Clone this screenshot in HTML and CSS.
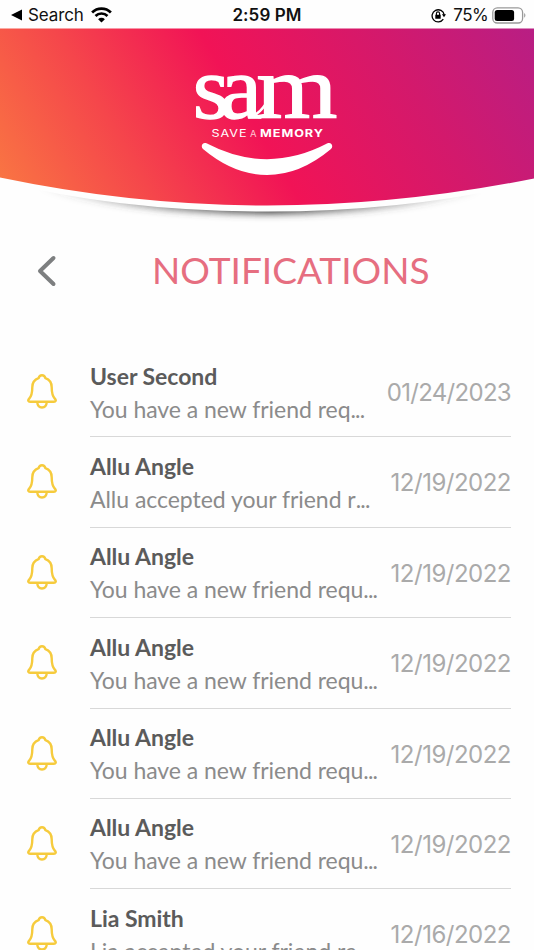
FILE: index.html
```html
<!DOCTYPE html>
<html lang="en">
<head>
<meta charset="utf-8">
<title>Notifications</title>
<link rel="stylesheet" href="styles.css">
</head>
<body>
<svg class="defs" aria-hidden="true">
  <symbol id="bell" viewBox="0 0 30 35">
    <path d="M15 1.300c-1.900 0-3 1.200-3.400 2.900C7.400 5.700 5.300 9 5.300 13.200c0 6.300-.9 9-3.100 11.400-1.700 1.900-.9 3.200.9 3.200h23.800c1.800 0 2.600-1.300.9-3.200-2.200-2.400-3.100-5.100-3.100-11.400 0-4.200-2.100-7.500-6.300-9C18 2.500 16.900 1.300 15 1.300zM10.200 28c.3 3.600 2.200 5.500 4.800 5.500s4.500-1.900 4.800-5.500"/>
  </symbol>
</svg>
<div class="status">
  <div class="status-left">
    <svg width="11" height="12" viewBox="0 0 11 12"><path d="M0 6 11 .5v11z"/></svg>
    <span class="search">Search</span>
    <svg class="wifi" width="21" height="16" viewBox="0 0 21 16"><g fill="none" stroke="#000" stroke-width="2.700"><path d="M1.100 5.500a13.400 13.400 0 0 1 18.800 0M4.500 9a8.500 8.500 0 0 1 12 0"/></g><path d="M10.500 15.600 7.100 12.200a4.900 4.900 0 0 1 6.800 0z"/></svg>
  </div>
  <span class="time">2:59 PM</span>
  <div class="status-right">
    <svg width="15" height="15" viewBox="0 0 15 15"><path d="M12.300 11.200A6.100 6.100 0 1 1 13.200 6.800" fill="none" stroke="#000" stroke-width="1.300"/><path d="M10.900 6.200H15l-2 3zM4.300 6.700h5.400v4H4.300z"/><path d="M5.400 7V5.500a1.600 1.600 0 0 1 3.200 0V7" fill="none" stroke="#000" stroke-width="1.100"/></svg>
    <span class="percent">75%</span>
    <svg width="34" height="17" viewBox="0 0 34 17"><rect x=".8" y=".8" width="29.800" height="15.200" rx="4.500" fill="#fff" stroke="#999" stroke-width="1.300"/><rect x="2.700" y="2.900" width="19.400" height="11" rx="2.500"/><path d="M32.200 6c1.600.8 1.600 4 0 4.800z" fill="#999"/></svg>
  </div>
</div>
<header class="hero">
  <svg width="534" height="200" viewBox="0 28 534 200">
    <defs>
      <linearGradient id="brand" gradientUnits="userSpaceOnUse" x1="0" y1="178" x2="461" y2="-95">
        <stop offset="0" stop-color="#f97443"/>
        <stop offset=".23" stop-color="#f5464b"/>
        <stop offset=".46" stop-color="#f11356"/>
        <stop offset=".75" stop-color="#d3196c"/>
        <stop offset="1" stop-color="#b81e84"/>
      </linearGradient>
      <linearGradient id="fade" gradientUnits="userSpaceOnUse" x1="40" y1="0" x2="480" y2="0">
        <stop offset="0" stop-color="#444" stop-opacity="0"/>
        <stop offset=".25" stop-color="#444" stop-opacity=".55"/>
        <stop offset=".53" stop-color="#444" stop-opacity="1"/>
        <stop offset="1" stop-color="#444" stop-opacity="0"/>
      </linearGradient>
      <filter id="soft" x="-10%" y="-50%" width="120%" height="200%"><feGaussianBlur stdDeviation="3.500"/></filter>
    </defs>
    <path d="M20 182Q120 214 267 214T514 182V160H20z" fill="url(#fade)" filter="url(#soft)"/>
    <path d="M0 150V181Q120 211.500 267 211.500T534 181V150z" fill="#fefefe"/>
    <path d="M0 28.500H534V178.500Q400 205.500 267 205.500T0 177.500z" fill="url(#brand)"/>
    <text class="logo" transform="scale(1.080 1)" x="178.500 203.500" y="118.500">sa</text>
    <text class="logo" transform="scale(1.180 1)" x="217.300" y="118.500">m</text>
    <path class="logo-link" d="M250 117Q259 114 265 105"/>
    <text class="tag" x="211.500" y="137" textLength="36" lengthAdjust="spacingAndGlyphs">SAVE</text>
    <text class="tag-small" x="250" y="137">A</text>
    <text class="tag tag-bold" x="260" y="137" textLength="64" lengthAdjust="spacingAndGlyphs">MEMORY</text>
    <path d="M206.500 143.300Q267 175 327.500 143.300C331 141.500 334 146 331 149Q300 175 267 175T203 149C200 146 203 141.500 206.500 143.300z" fill="#fff"/>
  </svg>
</header>
<div class="heading">
  <svg class="back" width="20" height="32" viewBox="0 0 20 32"><path d="M16.500 3 3 16l13.500 13"/></svg>
  <h1>NOTIFICATIONS</h1>
</div>
<main class="list">
  <article class="row"><svg class="bell"><use href="#bell"/></svg><div class="content"><div class="copy"><h2>User Second</h2><p>You have a new friend req<span>...</span></p></div><time class="date-wide">01/24/2023</time></div></article>
  <article class="row"><svg class="bell"><use href="#bell"/></svg><div class="content"><div class="copy"><h2>Allu Angle</h2><p>Allu accepted your friend r<span>...</span></p></div><time>12/19/2022</time></div></article>
  <article class="row"><svg class="bell"><use href="#bell"/></svg><div class="content"><div class="copy"><h2>Allu Angle</h2><p>You have a new friend requ<span>...</span></p></div><time>12/19/2022</time></div></article>
  <article class="row"><svg class="bell"><use href="#bell"/></svg><div class="content"><div class="copy"><h2>Allu Angle</h2><p>You have a new friend requ<span>...</span></p></div><time>12/19/2022</time></div></article>
  <article class="row"><svg class="bell"><use href="#bell"/></svg><div class="content"><div class="copy"><h2>Allu Angle</h2><p>You have a new friend requ<span>...</span></p></div><time>12/19/2022</time></div></article>
  <article class="row"><svg class="bell"><use href="#bell"/></svg><div class="content"><div class="copy"><h2>Allu Angle</h2><p>You have a new friend requ<span>...</span></p></div><time>12/19/2022</time></div></article>
  <article class="row"><svg class="bell"><use href="#bell"/></svg><div class="content"><div class="copy"><h2>Lia Smith</h2><p>Lia accepted your friend re<span>...</span></p></div><time>12/16/2022</time></div></article>
</main>
</body>
</html>
```

FILE: styles.css
```css
* { box-sizing: border-box; }
body { margin: 0; height: 950px; overflow: hidden; background: #fefefe; font-family: Lato, sans-serif; }
h1, h2, p { margin: 0; }
svg { display: block; flex: none; }
.defs { width: 0; height: 0; }
.status { height: 28px; display: grid; grid-template-columns: 1fr auto 1fr; align-items: center; padding: 2px 11px 0 11px; font-family: Inter, sans-serif; font-size: 17px; line-height: 26px; color: #111; }
.status-left, .status-right { display: flex; align-items: center; }
.search { margin-left: 6px; letter-spacing: -.1px; }
.wifi { margin-left: 7px; }
.time { font-weight: 600; letter-spacing: .1px; }
.status-right { justify-content: flex-end; margin-right: -3px; }
.percent { margin: 0 4px 0 7px; letter-spacing: -.6px; }
.hero { height: 200px; }
.logo { font: 88px "Liberation Serif", serif; fill: #fff; stroke: #fff; stroke-width: 1.4px; }
.logo-link { fill: none; stroke: #fff; stroke-width: 2.5; stroke-linecap: round; }
.tag { font: 400 10.5px Inter, sans-serif; letter-spacing: .8px; fill: #fff; }
.tag-bold { font-weight: 700; }
.tag-small { font: 9.5px Inter, sans-serif; fill: #ffc3d1; }
.heading { height: 119px; display: flex; align-items: flex-start; padding: 20px 0 0 37px; }
.back { margin-top: 7px; fill: none; stroke: #7d7f80; stroke-width: 4; stroke-linecap: round; stroke-linejoin: round; }
h1 { margin-left: 95px; font-size: 37px; font-weight: 400; line-height: 44px; color: #e66e80; white-space: nowrap; }
.row { display: flex; height: 90.4px; padding: 0 23px 0 27px; }
.bell { width: 30px; height: 35px; margin: 27px 33px 0 0; fill: none; stroke: #f6cb3d; stroke-width: 2.4; stroke-linejoin: round; }
.content { flex: 1; display: flex; justify-content: space-between; border-bottom: 1px solid #d8d8d8; white-space: nowrap; }
.copy { padding-top: 12.5px; }
h2 { font-size: 23px; line-height: 33px; font-weight: 700; color: #5b5b5b; letter-spacing: -.03px; }
p { font-size: 23px; line-height: 33px; color: #8b8b8b; letter-spacing: -.04px; }
p span { letter-spacing: -.8px; }
time { padding-top: 30px; font-family: Inter, sans-serif; font-size: 24px; line-height: 32px; letter-spacing: -.5px; color: #aaa; }
.date-wide { letter-spacing: -.7px; }
```
